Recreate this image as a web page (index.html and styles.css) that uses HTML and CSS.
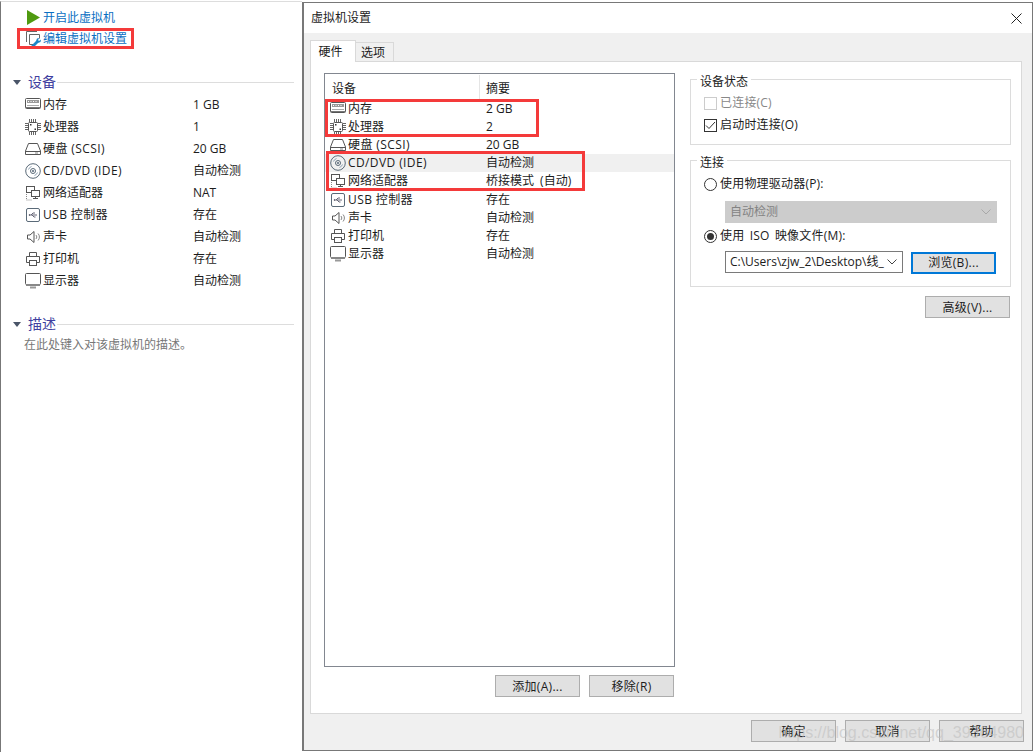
FILE: index.html
```html
<!DOCTYPE html>
<html lang="zh-CN">
<head>
<meta charset="utf-8">
<title>虚拟机设置</title>
<link rel="stylesheet" href="styles.css">
</head>
<body>
<svg class="defs" width="0" height="0" aria-hidden="true">
  <symbol id="i-mem" viewBox="0 0 16 16"><rect x=".5" y="1.500" width="15" height="10" rx="1" fill="#fff" stroke="#555"/><rect x="2" y="3" width="12" height="3" fill="#999"/><path d="M3 4.500h10" stroke="#fff" stroke-dasharray="1 1.500"/><path d="M2 8.500h12" stroke="#aaa"/><path d="M1 10.500h14" stroke="#777"/></symbol>
  <symbol id="i-cpu" viewBox="0 0 16 16"><g fill="none" stroke="#555"><rect x="3.500" y="3.500" width="9" height="9" rx="1"/><path d="M4.500 0v3M6.500 0v3M8.500 0v3M10.500 0v3M4.500 13v3M6.500 13v3M8.500 13v3M10.500 13v3M0 4.500h3M0 6.500h3M0 8.500h3M0 10.500h3M13 4.500h3M13 6.500h3M13 8.500h3M13 10.500h3" stroke="#666"/></g><rect x="5" y="5" width="1.500" height="1.500" fill="#333"/><rect x="9.500" y="9.500" width="1.500" height="1.500" fill="#333"/></symbol>
  <symbol id="i-disk" viewBox="0 0 16 16"><g fill="none" stroke="#555"><path d="M3.500 2.500h9L15.500 10v3.500h-15V10z"/><path d="M1 10.500h14"/><path d="M10 12h3" stroke="#888"/></g></symbol>
  <symbol id="i-cd" viewBox="0 0 16 16"><g fill="none" stroke="#5a6a78"><circle cx="8" cy="8" r="7.300"/><circle cx="8" cy="8" r="2.500"/><path d="M3.500 6.500a5 5 0 0 1 3-3M12.500 9.500a5 5 0 0 1-3 3" stroke="#8fa3b5"/></g><circle cx="8" cy="8" r="1" fill="#567"/></symbol>
  <symbol id="i-net" viewBox="0 0 16 16"><g fill="none" stroke="#555"><rect x="1.500" y="1.500" width="8" height="6"/><rect x="6.500" y="5.500" width="8" height="6" fill="#fff"/><path d="M10.500 11.500v2M8 13.500h5"/><path d="M1.500 9v6h5" stroke="#888" stroke-dasharray="1 1"/></g></symbol>
  <symbol id="i-usb" viewBox="0 0 16 16"><g fill="none" stroke="#5a6a78"><rect x="1.500" y="1.500" width="13" height="13" rx="1.500"/><path d="M4 8h8M6 8l2-2h2M7 8l2 2h1.500" stroke="#667"/></g><path d="M3.500 8l1.500-1v2z" fill="#556"/></symbol>
  <symbol id="i-snd" viewBox="0 0 16 16"><g fill="none" stroke="#555"><path d="M2.500 6v4h2.500l4 3.500v-11L5 6z"/><path d="M11 6a3 3 0 0 1 0 4M13 4.500a5 5 0 0 1 0 7" stroke="#888"/></g></symbol>
  <symbol id="i-prt" viewBox="0 0 16 16"><g fill="none" stroke="#555"><path d="M4.500 5V1.500h7V5"/><path d="M4 11.500H1.500v-6h13v6H12"/><rect x="4.500" y="9.500" width="7" height="5"/></g></symbol>
  <symbol id="i-dsp" viewBox="0 0 16 16"><rect x=".5" y=".5" width="15" height="11" rx="1" fill="#fff" stroke="#555"/><path d="M1 12h14" stroke="#888" stroke-width="2"/><path d="M5 14.500h6" stroke="#999" stroke-width="2"/></symbol>
  <symbol id="i-chev" viewBox="0 0 10 6"><path d="M.500.500L5 5l4.500-4.500" fill="none" stroke="currentColor"/></symbol>
</svg>

<aside class="side">
  <div class="action">
    <svg class="play" width="13" height="15" viewBox="0 0 13 15"><path d="M0 0l13 7.500L0 15z" fill="#4f9a10"/></svg>
    <span>开启此虚拟机</span>
  </div>
  <div class="action">
    <svg class="edit" width="16" height="16" viewBox="0 0 16 16"><g fill="none" stroke="#666"><path d="M.500 11V.500H11"/><path d="M3.500 13.500v-10h10v4M3.500 13.500h4"/></g><path d="M5 15l5-5 1-2.500 2.500-.5-1.500 2 1 1 2-1.500-.5 2.500-2.500 1-5 5z" fill="#1a86c8"/></svg>
    <span>编辑虚拟机设置</span>
  </div>

  <section class="sec sec-dev">
    <h2 class="sec-head"><i class="tri"></i><span>设备</span><b class="rule"></b></h2>
    <ul class="props">
      <li><svg class="ic"><use href="#i-mem"/></svg><span class="pn">内存</span><span class="pv">1 GB</span></li>
      <li><svg class="ic"><use href="#i-cpu"/></svg><span class="pn">处理器</span><span class="pv">1</span></li>
      <li><svg class="ic"><use href="#i-disk"/></svg><span class="pn lat">硬盘 (SCSI)</span><span class="pv">20 GB</span></li>
      <li><svg class="ic"><use href="#i-cd"/></svg><span class="pn lat">CD/DVD (IDE)</span><span class="pv">自动检测</span></li>
      <li><svg class="ic"><use href="#i-net"/></svg><span class="pn">网络适配器</span><span class="pv">NAT</span></li>
      <li><svg class="ic"><use href="#i-usb"/></svg><span class="pn lat">USB 控制器</span><span class="pv">存在</span></li>
      <li><svg class="ic"><use href="#i-snd"/></svg><span class="pn">声卡</span><span class="pv">自动检测</span></li>
      <li><svg class="ic"><use href="#i-prt"/></svg><span class="pn">打印机</span><span class="pv">存在</span></li>
      <li><svg class="ic"><use href="#i-dsp"/></svg><span class="pn">显示器</span><span class="pv">自动检测</span></li>
    </ul>
  </section>

  <section class="sec sec-desc">
    <h2 class="sec-head"><i class="tri"></i><span>描述</span><b class="rule"></b></h2>
    <p class="desc">在此处键入对该虚拟机的描述。</p>
  </section>
  <div class="mark mark-edit"></div>
</aside>

<main class="dialog">
  <header class="titlebar">
    <span>虚拟机设置</span>
    <svg class="close" width="11" height="11" viewBox="0 0 11 11"><path d="M.500.500l10 10M10.500.500l-10 10" stroke="#222" fill="none"/></svg>
  </header>
  <div class="dlg-body">
    <div class="tabs">
      <div class="tab tab-on">硬件</div>
      <div class="tab tab-off">选项</div>
    </div>
    <div class="panel">
      <div class="left-col">
        <div class="list">
          <div class="list-head"><span class="lh1">设备</span><span class="lh2">摘要</span></div>
          <div class="row"><svg class="ic"><use href="#i-mem"/></svg><span class="rn">内存</span><span class="rv">2 GB</span></div>
          <div class="row"><svg class="ic"><use href="#i-cpu"/></svg><span class="rn">处理器</span><span class="rv">2</span></div>
          <div class="row"><svg class="ic"><use href="#i-disk"/></svg><span class="rn lat">硬盘 (SCSI)</span><span class="rv">20 GB</span></div>
          <div class="row row-sel"><svg class="ic"><use href="#i-cd"/></svg><span class="rn lat">CD/DVD (IDE)</span><span class="rv">自动检测</span></div>
          <div class="row"><svg class="ic"><use href="#i-net"/></svg><span class="rn">网络适配器</span><span class="rv rv-sp">桥接模式 (自动)</span></div>
          <div class="row"><svg class="ic"><use href="#i-usb"/></svg><span class="rn lat">USB 控制器</span><span class="rv">存在</span></div>
          <div class="row"><svg class="ic"><use href="#i-snd"/></svg><span class="rn">声卡</span><span class="rv">自动检测</span></div>
          <div class="row"><svg class="ic"><use href="#i-prt"/></svg><span class="rn">打印机</span><span class="rv">存在</span></div>
          <div class="row"><svg class="ic"><use href="#i-dsp"/></svg><span class="rn">显示器</span><span class="rv">自动检测</span></div>
          <div class="mark mark-a"></div>
          <div class="mark mark-b"></div>
        </div>
        <div class="list-btns">
          <button class="btn">添加(A)...</button>
          <button class="btn">移除(R)</button>
        </div>
      </div>
      <div class="right-col">
        <div class="group group-state">
          <span class="legend">设备状态</span>
          <label class="opt opt-dis"><i class="cb"></i>已连接(C)</label>
          <label class="opt"><i class="cb cb-on"><svg width="11" height="9" viewBox="0 0 11 9"><path d="M1 4.500l3 3L10 1" fill="none" stroke="#333"/></svg></i>启动时连接(O)</label>
        </div>
        <div class="group group-conn">
          <span class="legend">连接</span>
          <label class="opt"><i class="rd"></i>使用物理驱动器(P):</label>
          <div class="sel sel-dis"><span>自动检测</span><svg class="chev" width="10" height="6"><use href="#i-chev"/></svg></div>
          <label class="opt opt-iso"><i class="rd rd-on"></i>使用 ISO 映像文件(M):</label>
          <div class="iso-row">
            <div class="sel sel-iso"><span>C:\Users\zjw_2\Desktop\线_</span><svg class="chev" width="10" height="6"><use href="#i-chev"/></svg></div>
            <button class="btn btn-focus">浏览(B)...</button>
          </div>
        </div>
        <div class="adv"><button class="btn">高级(V)...</button></div>
      </div>
    </div>
    <div class="foot">
      <button class="btn">确定</button>
      <button class="btn">取消</button>
      <button class="btn">帮助</button>
    </div>
  </div>
</main>
<div class="watermark">https://blog.csdn.net/qq_39364980</div>
</body>
</html>
```

FILE: styles.css
```css
* { box-sizing: border-box; }
html, body { margin: 0; padding: 0; }
body {
  width: 1034px; height: 752px; overflow: hidden; position: relative;
  display: flex; background: #fff; color: #1c1c1c;
  font: 12px/16px "Open Sans", "Noto Sans CJK SC", sans-serif;
}
.defs { position: absolute; }
ul { list-style: none; margin: 0; padding: 0; }
i { display: block; font-style: normal; }

/* left side */
.side {
  width: 302px; height: 752px; flex: none; position: relative;
  border-top: 1px solid #ddd; border-left: 1px solid #777;
  margin-top: 1px; padding-top: 5px;
}
.action { display: flex; align-items: center; height: 21px; color: #0b6fc2; position: relative; }
.action span { position: absolute; left: 42px; }
.play { margin-left: 26px; }
.edit { margin-left: 25px; }
.sec-head {
  display: flex; align-items: center; margin: 0; height: 20px;
  font-size: 14px; font-weight: 400; color: #3f3fa0;
}
.tri { width: 0; height: 0; margin-left: 12px; margin-right: 7px; border: 4.500px solid transparent; border-top: 5px solid #4a5568; border-bottom: 0; }
.rule { flex: 1; height: 1px; background: #ddd; margin: 0 8px 0 1px; }
.sec-dev { margin-top: 23px; }
.sec-desc { margin-top: 22px; }
.props { margin-top: 2px; }
.props li { display: flex; align-items: center; height: 22px; position: relative; }
.props .ic { margin-left: 24px; }
.ic { width: 16px; height: 16px; flex: none; }
.pn { margin-left: 2px; }
.pv { position: absolute; left: 192px; }
.lat { letter-spacing: .4px; }
.desc { margin: 3px 0 0 23px; color: #777; }

/* dialog */
.dialog {
  width: 731px; height: 749px; margin-top: 2px; flex: none;
  border: 1px solid #787878; border-left-width: 2px;
  display: flex; flex-direction: column;
}
.titlebar { height: 30px; flex: none; display: flex; align-items: center; justify-content: space-between; padding: 0 10px 0 7px; }
.dlg-body { flex: 1; background: #f0f0f0; padding: 7px 9px 0 6px; display: flex; flex-direction: column; }
.tabs { display: flex; align-items: flex-end; height: 22px; position: relative; z-index: 1; }
.tab { border: 1px solid #d9d9d9; border-bottom: 0; text-align: center; }
.tab-on { width: 46px; height: 22px; background: #fff; line-height: 21px; padding-right: 5px; }
.tab-off { width: 38px; height: 19px; background: #f0f0f0; line-height: 19px; border-left: 0; margin-bottom: 1px; padding-right: 3px; }
.panel {
  width: 712px; height: 653px; flex: none; background: #fff; border: 1px solid #d9d9d9;
  margin-top: -1px; padding: 11px 10px 0 13px; display: flex;
}
.left-col { width: 351px; flex: none; }
.list { height: 594px; border: 1px solid #828790; position: relative; }
.list-head { height: 26px; position: relative; }
.lh1, .lh2 { position: absolute; top: 7px; }
.lh1 { left: 7px; }
.lh2 { left: 161px; }
.lh2::before { content: ""; position: absolute; left: -7px; top: -6px; height: 25px; width: 1px; background: #e5e5e5; }
.row { display: flex; align-items: center; height: 18.100px; padding-left: 5px; position: relative; }
.row-sel { background: #f0f0f0; }
.rn { margin-left: 2px; }
.rv { position: absolute; left: 161px; }
.rv-sp { word-spacing: 3px; }
.list-btns { display: flex; justify-content: flex-end; gap: 9px; margin-top: 8px; padding-right: 1px; }
.btn {
  width: 85px; height: 22px; padding: 2px 0 0; background: #e1e1e1; border: 1px solid #adadad;
  font: inherit; color: #1c1c1c; display: block; letter-spacing: .3px;
}
.right-col { margin-left: 15px; width: 321px; flex: none; }
.group { border: 1px solid #dcdcdc; position: relative; padding-left: 13px; }
.group-state { height: 66px; margin-top: 6px; padding-top: 12px; }
.group-conn { height: 127px; margin-top: 15px; padding-top: 12px; }
.legend { position: absolute; left: 6px; top: -6px; background: #fff; padding: 0 3px; }
.opt { display: flex; align-items: center; height: 22px; letter-spacing: .2px; }
.opt-iso { word-spacing: 2px; }
.opt-dis { color: #888; }
.cb { width: 13px; height: 13px; border: 1px solid #333; background: #fff; margin-right: 3px; display: flex; align-items: center; justify-content: center; }
.opt-dis .cb { border-color: #ccc; }
.rd { width: 13px; height: 13px; border-radius: 50%; border: 1px solid #333; margin-right: 3px; position: relative; }
.rd-on::after { content: ""; position: absolute; inset: 2px; border-radius: 50%; background: #333; }
.sel { height: 22px; display: flex; align-items: center; justify-content: space-between; padding: 0 5px 0 4px; }
.sel-dis { width: 272px; margin: 6px 0 2px 21px; background: #ccc; border: 1px solid #ccc; color: #838383; }
.sel-dis .chev { color: #a8a8a8; }
.iso-row { display: flex; margin: 4px 0 0 21px; align-items: flex-start; }
.sel-iso { width: 178px; background: #fff; border: 1px solid #7a7a7a; white-space: nowrap; overflow: hidden; }
.sel-iso .chev { color: #444; }
.chev { flex: none; }
.btn-focus { margin: 1px 0 0 8px; border: 2px solid #0078d7; padding-top: 0; }
.adv { display: flex; justify-content: flex-end; margin-top: 9px; padding-right: 1px; }
.foot { display: flex; justify-content: flex-end; gap: 9px; margin-top: 6px; margin-right: -1px; }

/* annotations and overlays */
.mark { position: absolute; border: 3px solid #f43a3a; pointer-events: none; }
.mark-edit { left: 16px; top: 26px; width: 117px; height: 21px; }
.mark-a { left: 0; top: 25px; width: 214px; height: 38px; }
.mark-b { left: 1px; top: 77px; width: 259px; height: 40px; }
.watermark {
  position: absolute; right: 10px; top: 722px; white-space: nowrap;
  font: 16px/22px "Liberation Sans", sans-serif; color: rgba(190, 190, 190, .6);
}
```
